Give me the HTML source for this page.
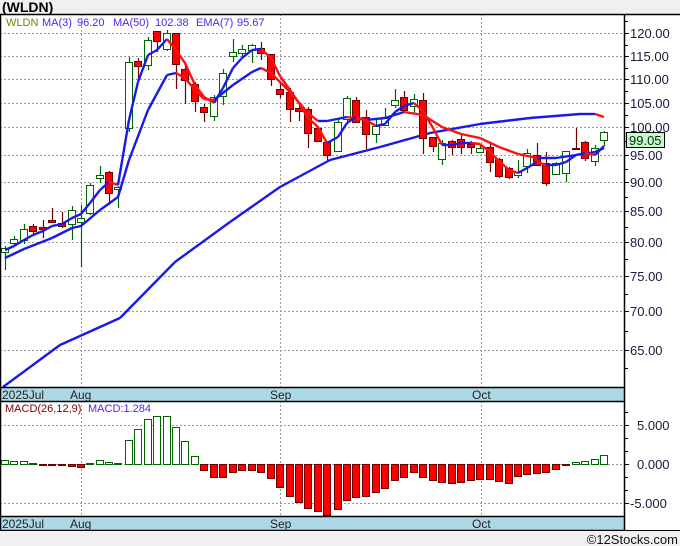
<!DOCTYPE html>
<html><head><meta charset="utf-8">
<style>
html,body{margin:0;padding:0;background:#f0f0f0;}
body{width:680px;height:546px;overflow:hidden;font-family:"Liberation Sans",sans-serif;}
svg{display:block}
</style></head><body>
<svg id="s" width="680" height="546" xmlns="http://www.w3.org/2000/svg" font-family="Liberation Sans, sans-serif">
<rect x="0" y="0" width="680" height="546" fill="#f0f0f0"/>
<text x="2" y="12" font-size="14" font-weight="bold" fill="#000">(WLDN)</text>
<rect x="0" y="14" width="680" height="516" fill="#fff"/>
<g id="g"></g>
</svg>
<script>
var g=document.getElementById('g'),h='';
function L(x1,y1,x2,y2,c,w,d){h+='<line x1="'+x1+'" y1="'+y1+'" x2="'+x2+'" y2="'+y2+'" stroke="'+c+'" stroke-width="'+(w||1)+'"'+(d?' stroke-dasharray="'+d+'"':'')+'/>';}
function R(x,y,w,hh,f,s){h+='<rect x="'+x+'" y="'+y+'" width="'+w+'" height="'+hh+'" fill="'+f+'"'+(s?' stroke="'+s+'"':'')+'/>';}
function T(x,y,t,c,sz,a){h+='<text x="'+x+'" y="'+y+'" font-size="'+(sz||13)+'" fill="'+c+'"'+(a?' text-anchor="'+a+'"':'')+'>'+t+'</text>';}
var lv=[[120,33],[115,56],[110,79],[105,103],[100,127],[95,155],[90,182],[85,211],[80,242],[75,276],[70,311],[65,350]];
lv.forEach(function(p){L(0,p[1]+.5,624,p[1]+.5,'#999',1,'2,2');T(630,p[1]+5,p[0].toFixed(2),'#1a1a3a',13);L(624,p[1]+.5,629,p[1]+.5,'#000');});
for(var i=0;i<lv.length-1;i++){var m=Math.round((lv[i][1]+lv[i+1][1])/2)+.5;L(624,m,628,m,'#000');}
L(624,21.5,628,21.5,'#000');L(624,368.5,628,368.5,'#000');
[81,280,481].forEach(function(x){L(x+.5,14,x+.5,387,'#999',1,'2,2');L(x+.5,401,x+.5,516,'#999',1,'2,2');});
[[425,'5.000'],[464,'0.000'],[503,'-5.000']].forEach(function(p){L(0,p[0]+.5,624,p[0]+.5,'#999',1,'2,2');T(p[1][0]=='-'?630:637,p[0]+5,p[1],'#1a1a3a',13);L(624,p[0]+.5,629,p[0]+.5,'#000');});
[412,438,451,477,490].forEach(function(y){L(624,y+.5,628,y+.5,'#000');});
var C=[[5,248,252,246,270,'G'],[14,239,243,236,245,'G'],[24,229,240,224,244,'G'],[33,226,231,224,234,'R'],[43,227,229,220,238,'R'],[52,220,222,208,223,'R'],[62,223,226,212,228,'R'],[72,210,224,206,240,'G'],[81,218,222,205,267,'G'],[90,185,213,183,215,'G'],[100,175,178,166,183,'G'],[109,172,193,171,205,'R'],[118,187,189,186,208,'G'],[129,62,128,57,132,'G'],[138,61,66,58,80,'R'],[148,40,65,37,70,'G'],[157,31,41,31,52,'R'],[167,33,49,30,51,'G'],[176,33,64,33,89,'R'],[185,69,80,62,104,'R'],[195,84,101,82,112,'R'],[204,107,112,104,122,'R'],[214,97,116,95,121,'G'],[223,73,96,69,105,'G'],[233,52,56,39,62,'G'],[242,49,53,45,58,'G'],[252,45,50,44,63,'G'],[261,48,53,42,60,'R'],[271,54,79,54,86,'R'],[280,89,94,82,98,'R'],[290,92,109,88,122,'R'],[299,108,111,103,121,'R'],[308,109,133,107,148,'R'],[318,128,141,128,142,'R'],[327,142,155,142,160,'R'],[338,122,151,119,152,'G'],[347,98,119,96,124,'G'],[356,100,122,97,123,'R'],[366,117,134,110,149,'R'],[376,126,134,118,143,'G'],[385,118,125,108,126,'G'],[395,100,105,89,108,'G'],[404,97,110,91,112,'R'],[414,99,106,94,113,'G'],[423,100,138,93,154,'R'],[433,137,146,137,152,'R'],[442,143,159,140,165,'G'],[452,141,147,140,155,'R'],[461,139,147,135,154,'R'],[471,144,147,141,154,'R'],[480,148,152,144,152,'G'],[490,147,162,143,172,'R'],[499,159,176,158,178,'R'],[509,168,177,167,179,'R'],[518,172,175,160,178,'G'],[527,153,166,149,173,'G'],[537,155,165,143,165,'R'],[546,163,183,152,186,'R'],[556,163,174,162,175,'G'],[566,151,173,151,182,'G'],[576,148,149,128,149,'R'],[585,142,158,141,161,'R'],[595,148,161,145,166,'G'],[604,132,140,131,146,'G']];
function poly(pts){for(var i=1;i<pts.length;i++){var a=pts[i-1],b=pts[i];L(a[0],a[1],b[0],b[1],b[1]>a[1]+0.3?'#ff1010':'#1a1ae6',2.4);}}
poly([[3,387],[60,345],[120,318],[175,262],[230,222],[280,187],[330,160],[380,147],[430,133],[480,124],[530,118],[580,114],[595,114],[604,117]]);
C.forEach(function(c){var x=c[0],col=c[5]=='G'?'#006400':'#700000';L(x+.5,c[3],x+.5,c[4],col,1.2);
 var hh=Math.max(1,c[2]-c[1]);if(c[5]=='G')R(x-3.5,c[1]+.5,7,hh,'#fff',col);else R(x-3.5,c[1]+.5,7,hh,'#ff0000','#700000');});
poly([[5,258],[24,249],[52,238],[72,228],[81,226],[100,210],[118,197],[129,160],[148,110],[167,75],[176,73],[185,78],[195,90],[204,99],[214,100],[233,85],[252,72],[261,68],[271,73],[290,92],[308,113],[318,121],[327,121],[347,117],[366,120],[385,118],[404,112],[423,115],[442,127],[461,134],[480,138],[499,147],[518,154],[537,158],[556,158],[576,155],[595,152],[604,148]]);
poly([[5,250],[14,246],[24,240],[33,235],[43,231],[52,226],[62,224],[72,218],[81,214],[90,203],[100,190],[109,182],[118,185],[129,120],[138,82],[148,55],[157,50],[167,39],[176,50],[185,63],[195,85],[204,97],[214,103],[223,88],[233,68],[242,58],[252,50],[261,49],[271,58],[280,76],[290,90],[299,103],[308,118],[318,127],[327,143],[338,137],[347,123],[356,117],[366,120],[376,126],[385,124],[395,112],[404,106],[414,103],[423,111],[433,128],[442,145],[452,145],[461,143],[471,143],[480,144],[490,152],[499,161],[509,170],[518,173],[527,168],[537,162],[546,165],[556,165],[566,162],[576,155],[585,153],[595,155],[604,146]]);
var M=[4,3,3,1,-1,-1,-1,-2,-3,1,4,2,1,24,35,45,48,48,37,23,8,-6,-13,-13,-8,-6,-6,-8,-14,-23,-32,-38,-44,-47,-51,-45,-36,-33,-32,-28,-24,-16,-13,-8,-13,-16,-18,-19,-18,-16,-15,-15,-17,-19,-12,-10,-9,-8,-5,-1,2,3,5,9];
M.forEach(function(v,i){var x=C[i][0];if(v>0)R(x-3.5,464.5-v,7,v,'#fff','#006400');else if(v<0)R(x-3.5,464.5,7,-v,'#ff0000','#700000');else L(x-3,464.5,x+3,464.5,'#700000',2);});
[[387,14],[516,14]].forEach(function(b){R(0,b[0],624,b[1],'#add8e6');L(0,b[0]+.5,624,b[0]+.5,'#000',1.5);L(0,b[0]+b[1]+.5,624,b[0]+b[1]+.5,'#000',1.5);
 T(2,b[0]+12,'2025Jul','#222',12);T(70,b[0]+12,'Aug','#222',12);T(270,b[0]+12,'Sep','#222',12);T(472,b[0]+12,'Oct','#222',12);});
L(0,14.5,680,14.5,'#000',1.5);L(624.5,14,624.5,531,'#000',1.5);L(0.5,14,0.5,531,'#000',1.5);L(0,530.5,680,530.5,'#000',1);
T(6,26,'WLDN','#808000',11);T(42,26,'MA(3)','#5522ee',11);T(77,26,'96.20','#5522ee',11);T(113,26,'MA(50)','#5522ee',11);T(155,26,'102.38','#5522ee',11);T(196,26,'EMA(7)','#5522ee',11);T(237,26,'95.67','#5522ee',11);
T(5,412,'MACD(26,12,9)','#800000',11);T(88,412,'MACD:1.284','#5522ee',11);
R(626.5,132.5,38,15,'#c0ffc0','#000');T(629,145,'99.05','#1a1a3a',13);
R(0,531,680,15,'#f0f0f0');T(678,544,'©12Stocks.com','#111',13,'end');
g.innerHTML=h;
</script>
</body></html>
